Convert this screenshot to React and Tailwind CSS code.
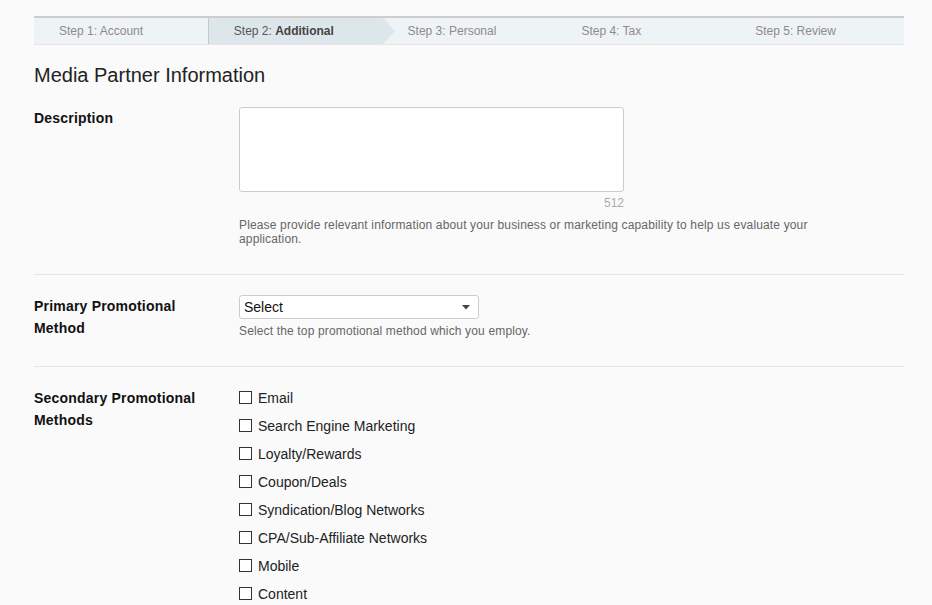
import React from "react";

const steps = [
  { pre: "Step 1:", label: "Account" },
  { pre: "Step 2:", label: "Additional", active: true },
  { pre: "Step 3:", label: "Personal" },
  { pre: "Step 4:", label: "Tax" },
  { pre: "Step 5:", label: "Review" },
];

const methods = [
  "Email",
  "Search Engine Marketing",
  "Loyalty/Rewards",
  "Coupon/Deals",
  "Syndication/Blog Networks",
  "CPA/Sub-Affiliate Networks",
  "Mobile",
  "Content",
];

export default function App() {
  return (
    <div
      className="min-h-[605px] w-[932px] bg-[#fafafa] pt-[16px] pl-[34px] pr-[28px]"
      style={{ fontFamily: '"Liberation Sans", Arial, sans-serif' }}
    >
      {/* Step bar */}
      <div className="flex h-[29px] border-t-2 border-b border-t-[#cdcdcd] border-b-[#e6e6e6] bg-[#eef3f6]">
        {steps.map((s, i) => (
          <div
            key={i}
            className={
              s.active
                ? "relative flex flex-1 items-center border-l border-l-[#c4c8ca] bg-[#dde6ea] pl-[25px] text-[12px] text-[#555]"
                : "relative flex flex-1 items-center pl-[25px] text-[12px] text-[#8c8c8c]"
            }
          >
            <span>
              {s.pre}{" "}
              {s.active ? <b className="text-[#444]">{s.label}</b> : s.label}
            </span>
            {s.active && (
              <span className="absolute right-[-12px] top-0 h-0 w-0 border-y-[13.5px] border-l-[12px] border-y-transparent border-l-[#dde6ea]" />
            )}
          </div>
        ))}
      </div>

      <h1 className="mt-[18px] text-[20px] leading-[24px] text-[#222]">
        Media Partner Information
      </h1>

      {/* Description */}
      <div className="flex border-b border-[#e5e5e5] pt-[20px] pb-[28px]">
        <div className="w-[205px] text-[14px] font-bold leading-[22px] tracking-[0.2px] text-[#111]">
          Description
        </div>
        <div className="flex flex-col">
          <textarea className="h-[85px] w-[385px] resize-none rounded-[3px] border border-[#cccccc] bg-white" />
          <div className="mt-[4px] w-[385px] text-right text-[12px] leading-[14px] text-[#aaa]">
            512
          </div>
          <p className="mt-[8px] w-[590px] text-[12px] leading-[14px] tracking-[0.15px] text-[#666]">
            Please provide relevant information about your business or marketing capability to help us evaluate your application.
          </p>
        </div>
      </div>

      {/* Primary */}
      <div className="flex border-b border-[#e5e5e5] pt-[20px] pb-[27px]">
        <div className="w-[205px] text-[14px] font-bold leading-[22px] tracking-[0.2px] text-[#111]">
          Primary Promotional
          <br />
          Method
        </div>
        <div className="flex flex-col">
          <div className="flex h-[24px] w-[240px] items-center justify-between rounded-[3px] border border-[#cccccc] bg-white pl-[4px] pr-[8px] text-[14px] text-[#111]">
            <span>Select</span>
            <svg width="8" height="5" viewBox="0 0 8 5">
              <path d="M0 0 L8 0 L4 4.5 Z" fill="#444" />
            </svg>
          </div>
          <p className="mt-[5px] text-[12px] leading-[14px] tracking-[0.15px] text-[#666]">
            Select the top promotional method which you employ.
          </p>
        </div>
      </div>

      {/* Secondary */}
      <div className="flex pt-[20px]">
        <div className="w-[205px] text-[14px] font-bold leading-[22px] tracking-[0.2px] text-[#111]">
          Secondary Promotional
          <br />
          Methods
        </div>
        <div className="flex flex-col gap-[6px]">
          {methods.map((m) => (
            <label key={m} className="flex h-[22px] items-center gap-[6px] text-[14px] text-[#222]">
              <span className="mb-[1px] inline-block h-[13px] w-[13px] border border-[#333] bg-white" />
              {m}
            </label>
          ))}
        </div>
      </div>
    </div>
  );
}
